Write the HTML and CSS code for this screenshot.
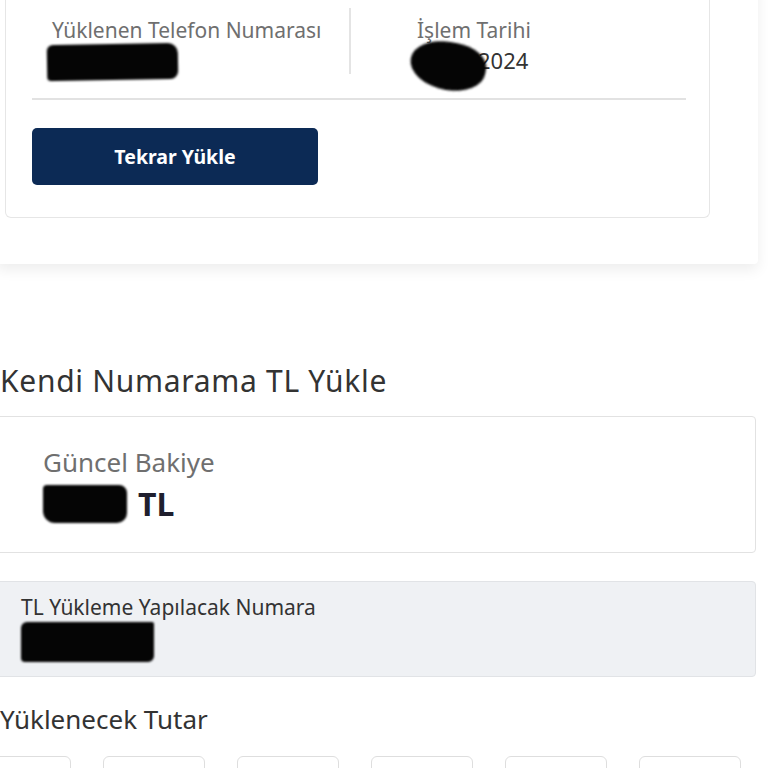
FILE: index.html
```html
<!DOCTYPE html>
<html lang="tr">
<head>
<meta charset="utf-8">
<link rel="stylesheet" href="styles.css">
</head>
<body>
<div class="page">
  <section class="outer-card">
    <div class="inner-card">
      <div class="info-row">
        <div class="info-col info-left">
          <div class="label">Yüklenen Telefon Numarası</div>
          <div class="value"><span class="blob blob-phone"></span></div>
        </div>
        <div class="divider"></div>
        <div class="info-col info-right">
          <div class="label">İşlem Tarihi</div>
          <div class="value date"><span class="blob blob-date"></span><span class="year">2024</span></div>
        </div>
      </div>
      <div class="hr"></div>
      <button class="btn-primary">Tekrar Yükle</button>
    </div>
  </section>

  <h2 class="section-title">Kendi Numarama TL Yükle</h2>

  <div class="balance-card">
    <div class="balance-label">Güncel Bakiye</div>
    <div class="balance-value"><span class="blob blob-balance"></span><span class="currency">TL</span></div>
  </div>

  <div class="number-card">
    <div class="number-label">TL Yükleme Yapılacak Numara</div>
    <span class="blob blob-number"></span>
  </div>

  <h3 class="amount-title">Yüklenecek Tutar</h3>
  <div class="amount-row">
    <div class="amount-box"></div>
    <div class="amount-box"></div>
    <div class="amount-box"></div>
    <div class="amount-box"></div>
    <div class="amount-box"></div>
    <div class="amount-box"></div>
  </div>
</div>
</body>
</html>
```

FILE: styles.css
```css
* { box-sizing: border-box; }
html, body { margin: 0; padding: 0; background: #ffffff; }
body {
  font-family: "Noto Sans", "Open Sans", "Liberation Sans", sans-serif;
  color: #333;
  width: 768px;
  height: 768px;
  overflow: hidden;
}
.page {
  width: 762px;
  margin-left: -4px;
}
.outer-card {
  background: #fff;
  margin-top: -20px;
  padding: 0 48px 46px 9px;
  box-shadow: 0 6px 14px rgba(0,0,0,0.07);
  border-radius: 4px;
}
.inner-card {
  border: 1px solid #e6e6e6;
  border-top: none;
  border-radius: 0 0 6px 6px;
  padding: 40px 23px 32px 26px;
}
.info-row {
  display: flex;
  align-items: stretch;
  height: 90px;
  margin-top: -12px;
}
.info-col { display: flex; flex-direction: column; }
.info-left { width: 317px; padding-left: 20px; padding-top: 10px; }
.info-right { padding-left: 66px; padding-top: 10px; }
.divider {
  width: 2px;
  background: #e4e4e4;
  height: 66px;
}
.label {
  font-size: 21px;
  color: #6f6f6f;
  line-height: 24px;
}
.value { height: 40px; }
.blob {
  display: inline-block;
  background: #050505;
  filter: blur(1.2px);
}
.blob-phone {
  width: 131px;
  height: 36px;
  margin-left: -5px;
  margin-top: 2px;
  border-radius: 6px 10px 8px 4px;
  transform: rotate(-1deg);
}
.date { display: flex; align-items: flex-start; }
.blob-date {
  width: 76px;
  height: 48px;
  margin-left: -7px;
  border-radius: 50% 45% 50% 55%;
  transform: rotate(10deg);
}
.year {
  font-size: 22px;
  color: #333;
  margin-left: -8px;
  margin-top: 3px;
}
.hr {
  height: 2px;
  background: #e2e2e2;
}
.btn-primary {
  display: block;
  margin-top: 28px;
  width: 286px;
  height: 57px;
  border: none;
  border-radius: 5px;
  background: #0c2a55;
  color: #fff;
  font-family: inherit;
  font-weight: 700;
  font-size: 19.5px;
}
.section-title {
  margin: 99px 0 0 4px;
  font-size: 30px;
  letter-spacing: 0.7px;
  font-weight: 400;
  color: #333;
  line-height: 36px;
}
.balance-card {
  margin-top: 17px;
  width: 760px;
  height: 137px;
  border: 1px solid #e2e2e2;
  border-radius: 4px;
  padding: 30px 0 0 46px;
}
.balance-label {
  font-size: 26px;
  color: #6f6f6f;
  line-height: 30px;
}
.balance-value {
  display: flex;
  align-items: center;
  margin-top: 8px;
}
.blob-balance {
  width: 84px;
  height: 38px;
  border-radius: 4px 8px 10px 12px;
}
.currency {
  font-size: 32px;
  line-height: 38px;
  font-weight: 700;
  color: #1f1f2e;
  margin-left: 11px;
}
.number-card {
  margin-top: 28px;
  width: 760px;
  height: 96px;
  background: #eff1f4;
  border: 1px solid #e1e3e6;
  border-radius: 4px;
  padding: 13px 0 0 24px;
}
.number-label {
  font-size: 21px;
  color: #333;
  line-height: 24px;
}
.blob-number {
  width: 133px;
  height: 40px;
  margin-top: 3px;
  border-radius: 6px 2px 6px 4px;
}
.amount-title {
  margin: 26px 0 0 4px;
  font-size: 26px;
  font-weight: 400;
  color: #333;
  line-height: 32px;
}
.amount-row {
  display: flex;
  gap: 32px;
  margin-top: 21px;
  margin-left: -27px;
}
.amount-box {
  flex: none;
  width: 102px;
  height: 60px;
  border: 1px solid #dedede;
  border-radius: 6px;
}
```
